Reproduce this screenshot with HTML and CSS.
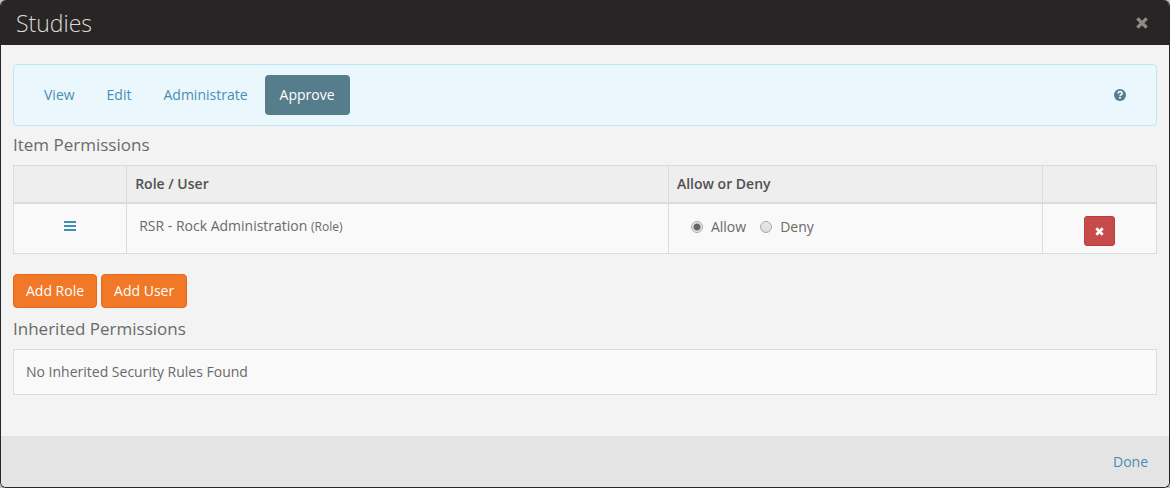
FILE: index.html
```html
<!DOCTYPE html>
<html lang="en">
<head>
<meta charset="utf-8">
<title>Studies</title>
<link rel="stylesheet" href="styles.css">
</head>
<body>
<div class="dialog" role="dialog" aria-labelledby="dialog-title">
  <header class="dialog-header">
    <h1 class="dialog-title" id="dialog-title">Studies</h1>
    <button class="close" type="button" aria-label="Close">
      <svg class="icon-close" viewBox="0 0 12 12" aria-hidden="true"><path d="M2.500 2.500 9.500 9.500M9.500 2.500 2.500 9.500" fill="none" stroke="currentColor" stroke-width="3.300" stroke-linecap="square"/></svg>
    </button>
  </header>
  <main class="dialog-body">
    <nav class="well">
      <ul class="pills">
        <li><a class="pill" href="#view">View</a></li>
        <li><a class="pill" href="#edit">Edit</a></li>
        <li><a class="pill" href="#administrate">Administrate</a></li>
        <li><a class="pill pill-active" href="#approve" aria-current="page">Approve</a></li>
      </ul>
      <a class="help" href="#help" aria-label="Help">
        <svg class="icon-help" viewBox="0 0 12 12" aria-hidden="true"><circle cx="6" cy="6" r="6" fill="currentColor"/><path d="M3.900 4.500C4.200 3.100 5 2.700 6 2.700c1.200 0 2.100.7 2.100 1.700 0 1.500-2.100 1.300-2.100 2.800" fill="none" stroke="#eaf7fd" stroke-width="1.700"/><path d="M5.100 8h1.800v1.800H5.100z" fill="#eaf7fd"/></svg>
      </a>
    </nav>
    <h2 class="section-title">Item Permissions</h2>
    <table class="grid">
      <colgroup><col class="col-handle"><col class="col-role"><col class="col-rule"><col class="col-remove"></colgroup>
      <thead>
        <tr><th></th><th scope="col">Role / User</th><th scope="col">Allow or Deny</th><th></th></tr>
      </thead>
      <tbody>
        <tr>
          <td class="center"><a class="reorder" href="#reorder" aria-label="Reorder"><svg class="icon-bars" viewBox="0 0 12 10" aria-hidden="true"><path d="M0 0h12v2H0zM0 4h12v2H0zM0 8h12v2H0z" fill="currentColor"/></svg></a></td>
          <td>RSR - Rock Administration <small>(Role)</small></td>
          <td>
            <div class="radios">
              <label class="radio"><input type="radio" name="rule" value="allow" checked>Allow</label>
              <label class="radio"><input type="radio" name="rule" value="deny">Deny</label>
            </div>
          </td>
          <td class="center"><button class="btn-remove" type="button" aria-label="Remove"><svg class="icon-remove" viewBox="0 0 12 12" aria-hidden="true"><path d="M3 3 9 9M9 3 3 9" fill="none" stroke="currentColor" stroke-width="3.600" stroke-linecap="square"/></svg></button></td>
        </tr>
      </tbody>
    </table>
    <div class="actions">
      <button class="btn" type="button">Add Role</button>
      <button class="btn" type="button">Add User</button>
    </div>
    <h2 class="section-title">Inherited Permissions</h2>
    <p class="empty">No Inherited Security Rules Found</p>
  </main>
  <footer class="dialog-footer"><a class="done" href="#done">Done</a></footer>
</div>
</body>
</html>
```
FILE: styles.css
```css
* { box-sizing: border-box; }

body {
  margin: 0;
  background: #c4c1bc;
  color: #6a6a6a;
  font: 14px/20px "Open Sans", sans-serif;
}

a { color: #4a8db3; text-decoration: none; }
button { font: inherit; cursor: pointer; }
svg { display: block; }

.dialog {
  display: flex;
  flex-direction: column;
  min-height: 100vh;
  overflow: hidden;
  border: 1px solid #282526;
  border-top: 0;
  border-radius: 6px;
  background: #f3f3f3;
}

.dialog-header {
  display: flex;
  align-items: center;
  justify-content: space-between;
  height: 45px;
  padding: 0 21px 0 15px;
  background: #282526;
}

.dialog-title {
  margin: 0;
  color: #dfdbd4;
  font-size: 23px;
  font-weight: 300;
  line-height: 32px;
}

.close { padding: 0; border: 0; background: none; color: #8f8b86; }
.icon-close { width: 12px; height: 12px; }

.dialog-body { flex: 1; padding: 19px 12px 40px; }

.well {
  display: flex;
  align-items: center;
  justify-content: space-between;
  padding: 10px 30px 10px 15px;
  border: 1px solid #bce8f8;
  border-radius: 4px;
  background: #eaf7fd;
}

.pills { display: flex; gap: 2px; margin: 0; padding: 0; list-style: none; }
.pill { display: block; padding: 10px 15px; border-radius: 4px; }
.pill-active { background: #567d8b; color: #fff; }
.help { color: #567d8b; }
.icon-help { width: 12px; height: 12px; }

.section-title {
  margin: 9px 0 10px;
  font-size: 17px;
  font-weight: 400;
  line-height: 20px;
}

.grid {
  width: 100%;
  border-collapse: collapse;
  table-layout: fixed;
  background: #f9f9f9;
}
.col-handle { width: 9.9%; }
.col-role { width: 47.4%; }
.col-rule { width: 32.7%; }
.col-remove { width: 10%; }
.grid th, .grid td { border: 1px solid #dbdbdb; text-align: left; }
.grid th {
  height: 37px;
  padding: 8px;
  border-bottom-width: 2px;
  background: #eee;
  color: #515151;
  font-weight: 600;
}
.grid td { padding: 12px; vertical-align: top; }
.grid small { font-size: 12px; }
.grid .center { text-align: center; }

.reorder { display: inline-block; padding: 5px 0; color: #418db3; }
.icon-bars { width: 12px; height: 10px; }

.radios { display: flex; gap: 14px; padding: 1px 0 0 10px; }
.radio { display: flex; align-items: center; gap: 8px; }
.radio input {
  appearance: none;
  width: 12px;
  height: 12px;
  margin: 0;
  border: 1px solid #ababab;
  border-radius: 50%;
  background: linear-gradient(#e9e9e9, #dcdcdc);
}
.radio input:checked { background: radial-gradient(circle, #666 0 3px, #e6e6e6 4px); }

.btn-remove {
  display: inline-flex;
  align-items: center;
  justify-content: center;
  width: 31px;
  height: 30px;
  padding: 0;
  border: 1px solid #bd3c3c;
  border-radius: 3px;
  background: #c84b4b;
  color: #fff;
  vertical-align: top;
}
.icon-remove { width: 9px; height: 9px; }
.grid td:last-child { padding-bottom: 4px; }
.grid td:nth-child(3) { padding-bottom: 8px; }

.actions { display: flex; gap: 4px; margin-top: 20px; }
.btn {
  padding: 6px 12px;
  border: 1px solid #e8671a;
  border-radius: 4px;
  background: #f07826;
  color: #fff;
}

.actions + .section-title { margin-top: 11px; }

.empty {
  margin: 0;
  padding: 12px;
  border: 1px solid #dbdbdb;
  background: #f9f9f9;
}

.dialog-footer {
  display: flex;
  justify-content: flex-end;
  padding: 16px 21px 15px;
  background: #e4e4e4;
}
```
